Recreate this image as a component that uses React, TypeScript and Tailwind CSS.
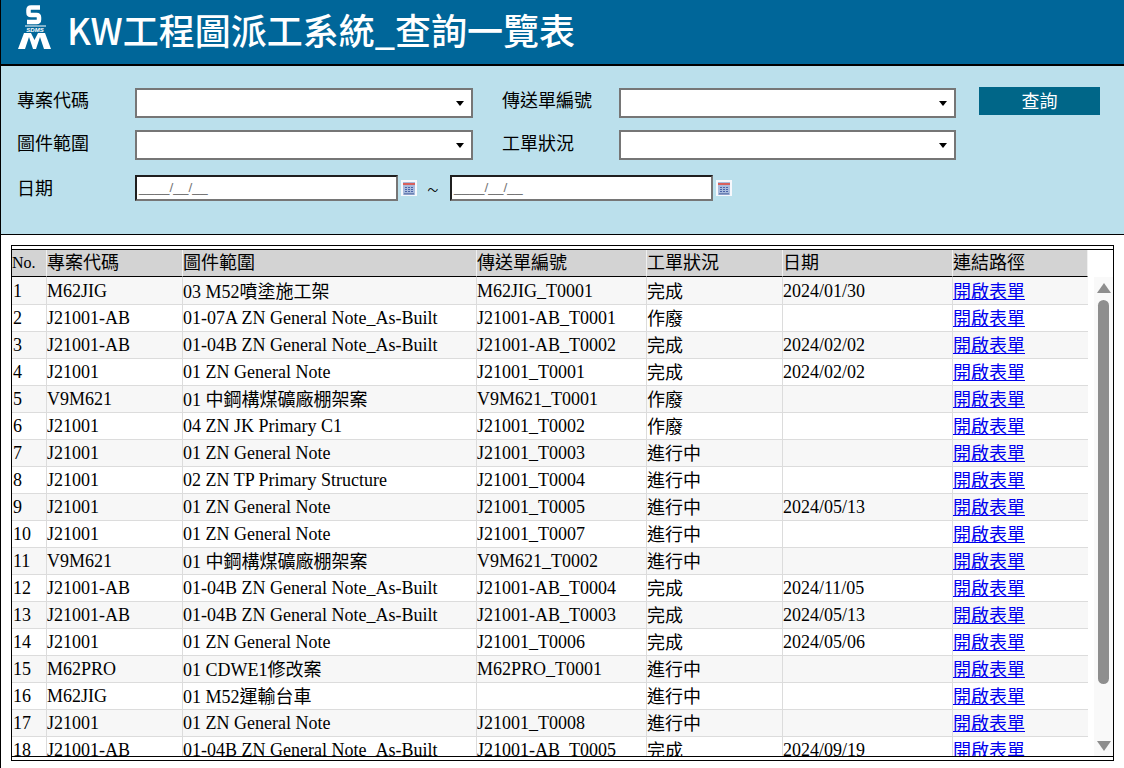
const rows: string[][] = [
  ["1", "M62JIG", "03 M52噴塗施工架", "M62JIG_T0001", "完成", "2024/01/30"],
  ["2", "J21001-AB", "01-07A ZN General Note_As-Built", "J21001-AB_T0001", "作廢", ""],
  ["3", "J21001-AB", "01-04B ZN General Note_As-Built", "J21001-AB_T0002", "完成", "2024/02/02"],
  ["4", "J21001", "01 ZN General Note", "J21001_T0001", "完成", "2024/02/02"],
  ["5", "V9M621", "01 中鋼構煤礦廠棚架案", "V9M621_T0001", "作廢", ""],
  ["6", "J21001", "04 ZN JK Primary C1", "J21001_T0002", "作廢", ""],
  ["7", "J21001", "01 ZN General Note", "J21001_T0003", "進行中", ""],
  ["8", "J21001", "02 ZN TP Primary Structure", "J21001_T0004", "進行中", ""],
  ["9", "J21001", "01 ZN General Note", "J21001_T0005", "進行中", "2024/05/13"],
  ["10", "J21001", "01 ZN General Note", "J21001_T0007", "進行中", ""],
  ["11", "V9M621", "01 中鋼構煤礦廠棚架案", "V9M621_T0002", "進行中", ""],
  ["12", "J21001-AB", "01-04B ZN General Note_As-Built", "J21001-AB_T0004", "完成", "2024/11/05"],
  ["13", "J21001-AB", "01-04B ZN General Note_As-Built", "J21001-AB_T0003", "完成", "2024/05/13"],
  ["14", "J21001", "01 ZN General Note", "J21001_T0006", "完成", "2024/05/06"],
  ["15", "M62PRO", "01 CDWE1修改案", "M62PRO_T0001", "進行中", ""],
  ["16", "M62JIG", "01 M52運輸台車", "", "進行中", ""],
  ["17", "J21001", "01 ZN General Note", "J21001_T0008", "進行中", ""],
  ["18", "J21001-AB", "01-04B ZN General Note_As-Built", "J21001-AB_T0005", "完成", "2024/09/19"],
];

const headers = ["No.", "專案代碼", "圖件範圍", "傳送單編號", "工單狀況", "日期", "連結路徑"];
const colWidths = ["w-[35px]", "w-[136px]", "w-[294px]", "w-[170px]", "w-[136px]", "w-[170px]", "w-[135px]"];

// cells holding CJK text sit 1px lower than plain latin ones
function cellPad(firstRow: boolean, cjk: boolean) {
  if (cjk) return firstRow ? "pt-[3px] leading-[24px]" : "pt-[2px] leading-[24px]";
  return firstRow ? "pt-[1px] leading-[26px]" : "pt-0 leading-[26px]";
}

function Logo() {
  return (
    <svg width="34" height="46" viewBox="0 0 34 46" className="shrink-0 mb-[10px]">
      <path d="M22 3.5H13Q10.5 3.5 10.5 6V8.5Q10.5 11 13 11H18.5Q21 11 21 13.5V15.5Q21 18 18.5 18H9" fill="none" stroke="#fff" strokeWidth="4.5" />
      <path d="M7 22h21" stroke="#fff" strokeWidth="1" />
      <text x="17" y="27.5" textAnchor="middle" fontSize="6" fontStyle="italic" fill="#fff" fontFamily="Liberation Sans, sans-serif" fontWeight="700">SDMS</text>
      <path d="M0 45 6 29H13L16.5 36 20 29H27L33 45H26L22 33 18 45H15L11 33 7 45Z" fill="#fff" />
    </svg>
  );
}

function CalendarIcon() {
  return (
    <svg width="16" height="16" viewBox="0 0 16 16" className="shrink-0">
      <rect width="16" height="16" fill="#f6f8fc" />
      <rect x="2" y="2" width="12" height="13" fill="#a9bbdc" />
      <rect x="2" y="3" width="12" height="2" fill="#d8605c" />
      <path d="M4 7.5h8M4 9.5h8M4 11.5h8" stroke="#4a64a8" strokeWidth="1" strokeDasharray="2 1" />
      <rect x="3" y="13" width="10" height="1.5" fill="#6d82b4" />
    </svg>
  );
}

function SelectBox({ width }: { width: string }) {
  return (
    <div className={`${width} h-[30px] border-2 border-[#767676] bg-white flex items-center justify-end pr-[7px]`}>
      <svg width="8" height="5" viewBox="0 0 8 5">
        <path d="M0 0h8L4 5z" fill="#000" />
      </svg>
    </div>
  );
}

function DateBox() {
  return (
    <div className="w-[263px] h-[26px] bg-white border-2 border-t-[#1f1f1f] border-l-[#1f1f1f] border-r-[#767676] border-b-[#767676] px-[2px] text-[13.7px] leading-[22px] text-[#757575] font-['Liberation_Sans',sans-serif]">
      ____/__/__
    </div>
  );
}

export default function App() {
  return (
    <div className="h-screen overflow-hidden bg-white border-l border-black font-['Noto_Sans_CJK_TC','Liberation_Sans',sans-serif]">
      <div className="h-[64px] bg-[#006699] flex items-center pl-[17px] gap-[15px]">
        <Logo />
        <h1 className="text-white text-[36px] font-medium leading-none mb-[6px]">KW工程圖派工系統_查詢一覽表</h1>
      </div>
      <div className="h-[171px] bg-[#bbe0ec] border-t-2 border-black border-b-[1px] pt-[22px] pl-[16px] text-[18px] text-black">
        <div className="flex items-start h-[30px]">
          <label className="w-[118px] leading-[22px]">專案代碼</label>
          <SelectBox width="w-[338px]" />
          <label className="w-[118px] ml-[28px] pl-[1px] leading-[22px]">傳送單編號</label>
          <SelectBox width="w-[337px]" />
          <button className="ml-[23px] -mt-[1px] w-[121px] h-[28px] pb-[2px] bg-[#006688] text-white text-[18px] leading-none">查詢</button>
        </div>
        <div className="flex items-start h-[30px] mt-[12px]">
          <label className="w-[118px] leading-[24px]">圖件範圍</label>
          <SelectBox width="w-[338px]" />
          <label className="w-[118px] ml-[28px] pl-[1px] leading-[24px]">工單狀況</label>
          <SelectBox width="w-[337px]" />
        </div>
        <div className="flex items-start h-[26px] mt-[15px]">
          <label className="w-[118px] leading-[24px]">日期</label>
          <DateBox />
          <span className="ml-[3px] mt-[5px]"><CalendarIcon /></span>
          <span className="w-[33px] pr-[1px] text-center text-[22px] font-light leading-[26px]">~</span>
          <DateBox />
          <span className="ml-[3px] mt-[5px]"><CalendarIcon /></span>
        </div>
      </div>
      <div className="mt-[10px] ml-[10px] w-[1103px] h-[516px] border border-black pt-[3px] overflow-hidden">
        <div className="border-t border-b border-black h-[508px] flex overflow-hidden">
          <div className="w-[1076px] overflow-hidden">
            <table className="w-[1076px] table-fixed border-separate border-spacing-0 font-['Liberation_Serif','Noto_Sans_CJK_TC',serif] text-[18px] text-black">
              <thead>
                <tr className="h-[27px] bg-[#d3d3d3]">
                  {headers.map((h, i) => (
                    <th key={h} className={`${colWidths[i]} ${i === 0 ? "text-[16px]" : ""} font-normal text-left p-0 border-b border-r border-b-black border-r-[#f0f0f0] leading-[24px]`}>
                      {h}
                    </th>
                  ))}
                </tr>
              </thead>
              <tbody>
                {rows.map((r, idx) => (
                  <tr key={r[0]} className={`${idx === 0 ? "h-[28px]" : "h-[27px]"} ${idx % 2 === 0 ? "bg-[#f7f7f7]" : "bg-white"}`}>
                    {r.map((c, i) => (
                      <td key={i} className={`${i === 0 ? "pl-[1px]" : "pl-0"} ${cellPad(idx === 0, /[^\x00-\x7f]/.test(c))} border-b border-r border-[#dcdcdc] whitespace-nowrap overflow-hidden`}>
                        {c}
                      </td>
                    ))}
                    <td className={`${cellPad(idx === 0, true)} border-b border-[#dcdcdc] whitespace-nowrap`}>
                      <a href="#" className="text-[#0000ee] underline">開啟表單</a>
                    </td>
                  </tr>
                ))}
              </tbody>
            </table>
          </div>
          <div className="flex-1 pl-[6px] pt-[27px]">
            <div className="h-full bg-[#f9f9f9] flex flex-col items-center pt-[6px] pb-[5px]">
              <svg width="14" height="10" viewBox="0 0 14 10" className="shrink-0">
                <path d="M7 0l7 10H0z" fill="#8e8e8e" />
              </svg>
              <div className="w-[11px] h-[384px] mt-[7px] bg-[#8e8e8e] rounded-full" />
              <div className="flex-1" />
              <svg width="14" height="10" viewBox="0 0 14 10" className="shrink-0">
                <path d="M0 0h14L7 10z" fill="#8e8e8e" />
              </svg>
            </div>
          </div>
        </div>
      </div>
    </div>
  );
}
